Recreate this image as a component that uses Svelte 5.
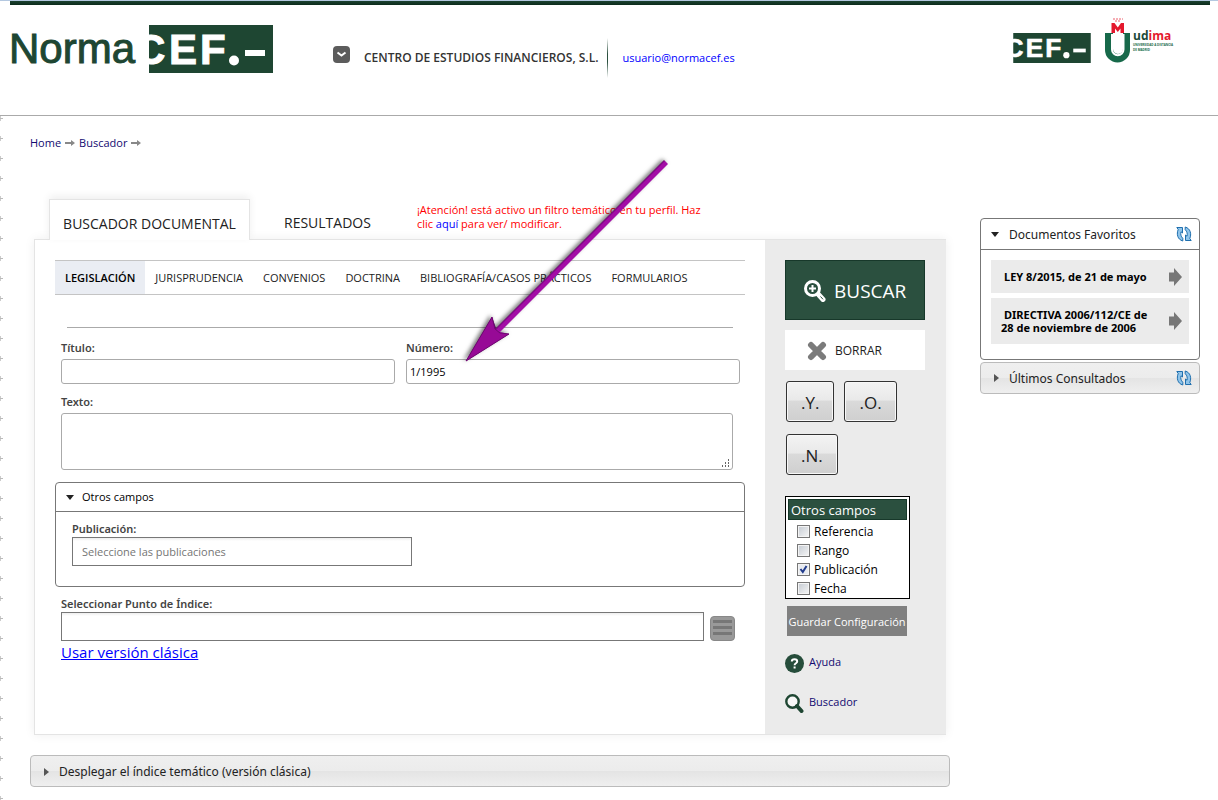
<script>
  const areas = ['LEGISLACIÓN', 'JURISPRUDENCIA', 'CONVENIOS', 'DOCTRINA', 'BIBLIOGRAFÍA/CASOS PRÁCTICOS', 'FORMULARIOS'];
  let activeArea = $state('LEGISLACIÓN');
  let titulo = $state('');
  let numero = $state('1/1995');
  let texto = $state('');
  let indice = $state('');
  const operators = ['.Y.', '.O.', '.N.'];
  let extraFields = $state([
    { name: 'Referencia', on: false },
    { name: 'Rango', on: false },
    { name: 'Publicación', on: true },
    { name: 'Fecha', on: false }
  ]);
  const favourites = ['LEY 8/2015, de 21 de mayo', 'DIRECTIVA 2006/112/CE de 28 de noviembre de 2006'];

  function clearForm() {
    titulo = '';
    numero = '';
    texto = '';
    indice = '';
  }
</script>

{#snippet cefLogo(cls)}
  <svg class={cls} viewBox="0 0 124 48" role="img" aria-label="CEF">
    <rect width="124" height="48" fill="#1e4632" />
    <text x="-14 20 51" y="39" class="cef-letters">CEF</text>
    <circle cx="85" cy="35.500" r="5" fill="#fff" />
    <rect x="96" y="25" width="20" height="6" fill="#fff" />
  </svg>
{/snippet}

{#snippet crumbArrow()}
  <svg class="crumb-arrow" viewBox="0 0 10 6" aria-hidden="true">
    <path d="M0 2H6V0L10 3L6 6V4H0Z" fill="#888" />
  </svg>
{/snippet}

{#snippet refreshIcon()}
  <svg viewBox="0 0 16 16" aria-hidden="true">
    <g fill="#8fc4ea" stroke="#1f6fae" stroke-width="1" stroke-linejoin="round">
      <path d="M.8 1.500H6.500V7L5 5.800C4.400 8 4.800 10.500 6.800 12.300V15C1.500 13.500 .3 8 2.200 3.500Z" />
      <path d="M15.200 14.500H9.500V9L11 10.200C11.600 8 11.200 5.500 9.200 3.700V1C14.500 2.500 15.700 8 13.800 12.500Z" />
    </g>
  </svg>
{/snippet}

<div class="page">
  <header>
    <div class="brand">
      <span class="norma">Norma</span>
      {@render cefLogo('cef-big')}
    </div>
    <div class="account">
      <button class="toggle" aria-label="Cuenta">
        <svg viewBox="0 0 17 17" aria-hidden="true"><path d="M4.500 6.500L8.500 9.500L12.500 6.500" fill="none" stroke="#fff" stroke-width="2" /></svg>
      </button>
      <strong>CENTRO DE ESTUDIOS FINANCIEROS, S.L.</strong>
      <span class="rule"></span>
      <a href="#cuenta">usuario@normacef.es</a>
    </div>
    <div class="partners">
      {@render cefLogo('cef-small')}
      <svg class="udima" viewBox="0 0 74 46" role="img" aria-label="udima">
        <path d="M0 15H8V31a5 5 0 0 0 10 0V15H25V32A12.500 12.500 0 0 1 0 32Z" fill="#17694a" />
        <path d="M7 16V31.500a5.500 5.500 0 0 0 11.500 0V16" fill="none" stroke="#fff" stroke-width="2" />
        <path d="M6.500 15V5H9.500L12.800 9.500L16 5H19V15H15.500V10.500L12.800 14L10 10.500V15Z" fill="#e4182d" />
        <path d="M8 1H18M10 3H16" stroke="#e4182d" stroke-width="1" stroke-dasharray="2 1" opacity="0.700" />
        <text x="28" y="22" class="udima-name">ud<tspan fill="#e4182d">ima</tspan></text>
        <text x="28" y="28" class="udima-sub">UNIVERSIDAD A DISTANCIA</text>
        <text x="28" y="33" class="udima-sub">DE MADRID</text>
      </svg>
    </div>
  </header>

  <div class="columns">
    <main>
      <nav class="crumbs" aria-label="Ruta">
        <a href="#home">Home</a>{@render crumbArrow()}<a href="#buscador">Buscador</a>{@render crumbArrow()}
      </nav>

      <div class="tabs">
        <button class="tab active">BUSCADOR DOCUMENTAL</button>
        <button class="tab">RESULTADOS</button>
        <p class="notice">¡Atención! está activo un filtro temático en tu perfil. Haz clic <a href="#perfil">aquí</a> para ver/ modificar.</p>
      </div>

      <div class="panel">
        <form class="search" onsubmit={(e) => e.preventDefault()}>
          <nav class="areas" aria-label="Áreas">
            {#each areas as area}
              <button type="button" class:current={area === activeArea} onclick={() => (activeArea = area)}>{area}</button>
            {/each}
          </nav>
          <hr />
          <div class="pair">
            <div class="field">
              <label for="titulo">Título:</label>
              <input id="titulo" bind:value={titulo} />
            </div>
            <div class="field">
              <label for="numero">Número:</label>
              <input id="numero" bind:value={numero} />
            </div>
          </div>
          <div class="field text">
            <label for="texto">Texto:</label>
            <div class="area-wrap">
              <textarea id="texto" bind:value={texto}></textarea>
              <svg class="grip" viewBox="0 0 8 8" aria-hidden="true">
                <path d="M7 0h1v2h-1zM4 3h1v2h-1zM7 3h1v2h-1zM1 6h1v2h-1zM4 6h1v2h-1zM7 6h1v2h-1z" fill="#666" />
              </svg>
            </div>
          </div>
          <section class="more">
            <button type="button" class="more-head"><i class="down"></i>Otros campos</button>
            <div class="more-body">
              <label for="publicacion">Publicación:</label>
              <input id="publicacion" class="square" placeholder="Seleccione las publicaciones" />
            </div>
          </section>
          <div class="index">
            <label for="indice">Seleccionar Punto de Índice:</label>
            <div class="index-row">
              <input id="indice" class="square" bind:value={indice} />
              <button type="button" class="list" aria-label="Abrir índice">
                <svg viewBox="0 0 23 23" aria-hidden="true"><path d="M2 4.500H21M2 10.500H21M2 16.500H21" stroke="#777" stroke-width="3" /></svg>
              </button>
            </div>
            <a class="classic" href="#clasica">Usar versión clásica</a>
          </div>
        </form>

        <aside class="tools">
          <button class="buscar">
            <svg viewBox="0 0 22 22" aria-hidden="true">
              <path d="M14 14L19 19.500" stroke="#fff" stroke-width="5" stroke-linecap="round" />
              <path d="M16.500 16.500L19 19.300" stroke="#2b503f" stroke-width="1" />
              <circle cx="8.500" cy="8.500" r="7" fill="#2b503f" stroke="#fff" stroke-width="3" />
              <path d="M8.500 5V12M5 8.500H12" stroke="#fff" stroke-width="2" />
            </svg>
            BUSCAR
          </button>
          <button class="borrar" onclick={clearForm}>
            <svg viewBox="0 0 20 20" aria-hidden="true"><path d="M4 4L16 16M16 4L4 16" stroke="#7b7b7b" stroke-width="6" stroke-linecap="round" /></svg>
            BORRAR
          </button>
          <div class="ops">
            {#each operators as op}<button>{op}</button>{/each}
          </div>
          <fieldset>
            <div class="legend">Otros campos</div>
            {#each extraFields as f}
              <label><input type="checkbox" bind:checked={f.on} />{f.name}</label>
            {/each}
          </fieldset>
          <button class="save">Guardar Configuración</button>
          <nav class="links" aria-label="Ayuda">
            <a href="#ayuda">
              <svg viewBox="0 0 19 19" aria-hidden="true">
                <circle cx="9.500" cy="9.500" r="9.500" fill="#264d3b" />
                <path d="M6.800 7.500C6.800 4.500 12.200 4.500 12.200 7.500C12.200 9.300 9.600 9.200 9.600 11.200M9.600 12.500V14.500" fill="none" stroke="#fff" stroke-width="2" />
              </svg>
              Ayuda
            </a>
            <a href="#buscador">
              <svg viewBox="0 0 19 19" aria-hidden="true">
                <circle cx="7.500" cy="7.500" r="6.200" fill="#f7f7f7" stroke="#1e4632" stroke-width="2.400" />
                <path d="M12 12L16.500 17" stroke="#1e4632" stroke-width="4" stroke-linecap="round" />
              </svg>
              Buscador
            </a>
          </nav>
        </aside>
      </div>

      <button class="fold"><i class="right"></i>Desplegar el índice temático (versión clásica)</button>
    </main>

    <aside class="side">
      <section class="fav">
        <div class="side-head">
          <i class="down"></i><h2>Documentos Favoritos</h2>
          <button class="refresh" aria-label="Actualizar favoritos">{@render refreshIcon()}</button>
        </div>
        <ul>
          {#each favourites as doc}
            <li>
              <a href="#documento">{doc}</a>
              <svg viewBox="0 0 13 18" aria-hidden="true"><path d="M0 4.500H5V0L13 9L5 18V13.500H0Z" fill="#777" /></svg>
            </li>
          {/each}
        </ul>
      </section>
      <div class="side-head closed">
        <i class="right"></i><h2>Últimos Consultados</h2>
        <button class="refresh" aria-label="Actualizar consultados">{@render refreshIcon()}</button>
      </div>
    </aside>
  </div>

  <svg class="pointer" viewBox="0 0 220 220" aria-hidden="true">
    <defs>
      <linearGradient id="shaft" gradientUnits="userSpaceOnUse" x1="107" y1="107" x2="112" y2="112">
        <stop offset="0.200" stop-color="#5a0560" />
        <stop offset="0.600" stop-color="#a30da6" />
      </linearGradient>
    </defs>
    <path d="M10 210L36 166L40 177L208 9L212 13L44 181L53 183Z" fill="url(#shaft)" />
    <path d="M10 210L36 166L39 178L44 182L53 183Z" fill="#970a96" stroke="#6d0870" stroke-width="1" />
  </svg>
</div>

<style>
  :global(body) {
    margin: 0;
    background: #fff;
  }
  .page {
    position: relative;
    min-height: 800px;
    overflow: hidden;
    color: #222;
    font: 12px/16px 'Open Sans', 'Noto Sans', sans-serif;
    box-sizing: border-box;
  }
  .page :global(*) {
    box-sizing: border-box;
  }
  button,
  input,
  textarea {
    font: inherit;
    color: inherit;
    margin: 0;
  }
  button {
    padding: 0;
    border: 0;
    background: none;
    cursor: pointer;
  }
  svg {
    display: block;
    flex: none;
  }
  a {
    color: #00f;
    text-decoration: none;
  }

  header {
    display: flex;
    height: 116px;
    border-bottom: 1px solid #aaa;
    background:
      linear-gradient(#1b4230, #0c2c1c) 10px 1px / calc(100% - 18px) 4px no-repeat,
      linear-gradient(#b4c8e0, #b4c8e0) 0 0 / 100% 1px no-repeat;
    padding: 0 39px 0 9px;
  }
  .brand {
    display: flex;
    gap: 14px;
    width: 324px;
    padding-top: 25px;
  }
  .norma {
    font: 42px/48px 'Liberation Sans', sans-serif;
    color: #1e4632;
    -webkit-text-stroke: 1px #1e4632;
  }
  .cef-big {
    width: 124px;
    height: 48px;
  }
  .cef-letters {
    font: bold 42px 'Liberation Sans', sans-serif;
    fill: #fff;
    stroke: #fff;
    stroke-width: 1px;
  }
  .account {
    display: flex;
    flex: 1;
    height: 40px;
    margin-top: 38px;
    align-items: center;
  }
  .toggle {
    width: 17px;
    height: 17px;
    border-radius: 4px;
    background: #5c5c5c;
    margin: 0 14px 7px 0;
  }
  .account strong {
    font-weight: 600;
    color: #333;
  }
  .rule {
    width: 1px;
    height: 40px;
    margin: 0 14px 0 9px;
    background: linear-gradient(#fff, #2b503f 40%, #2b503f 60%, #fff);
  }
  .account a {
    font-size: 11px;
  }
  .partners {
    display: flex;
    gap: 14px;
    padding-top: 18px;
  }
  .cef-small {
    width: 78px;
    height: 30px;
    margin-top: 15px;
  }
  .udima {
    width: 74px;
    height: 46px;
    overflow: visible;
  }
  .udima-name {
    font: bold 12px 'Open Sans', sans-serif;
    fill: #1b4a39;
  }
  .udima-sub {
    font: bold 3px 'Open Sans', sans-serif;
    fill: #17694a;
  }

  .columns {
    display: grid;
    grid-template-columns: 1fr 220px;
    gap: 30px;
    align-items: start;
    padding: 19px 18px 13px 30px;
    background:
      repeating-linear-gradient(#0000 0 2px, #bbb 2px 3px, #0000 3px 20px) 0 0 / 3px 100% no-repeat,
      repeating-linear-gradient(#ccc 0 5px, #0000 5px 20px) 0 0 / 1px 100% no-repeat;
  }
  .crumbs {
    display: flex;
    align-items: center;
    gap: 4px;
    font-size: 11px;
  }
  .crumbs a,
  .links a {
    color: #120a70;
  }
  .crumb-arrow {
    width: 10px;
    height: 6px;
  }
  .tabs {
    display: flex;
    align-items: flex-start;
    height: 40px;
    margin: 48px 0 0 19px;
  }
  .tab {
    height: 41px;
    padding-top: 7px;
    font-size: 14px;
  }
  .tab.active {
    position: relative;
    width: 201px;
    border: 1px solid #e4e4e4;
    border-bottom: 0;
    background: #fff;
    box-shadow: 0 -3px 8px #0001;
    margin-right: 34px;
  }
  .notice {
    width: 300px;
    margin: 4px 0 0 46px;
    font-size: 11px;
    line-height: 14px;
    color: #f00;
  }
  .panel {
    display: grid;
    grid-template-columns: 1fr 181px;
    margin: 0 4px;
    border: 1px solid #e4e4e4;
    border-right: 0;
    background: #fff;
    box-shadow: 0 0 10px #0001;
  }
  .search {
    padding: 20px;
  }
  .areas {
    display: flex;
    height: 35px;
    border: solid #c4c4c4;
    border-width: 1px 0;
  }
  .areas button {
    padding: 0 10px;
    font-size: 11px;
    white-space: nowrap;
  }
  .areas .current {
    background: #eaedf3;
    font-weight: 600;
    color: #000;
  }
  hr {
    margin: 32px 12px 12px;
    border: 0;
    border-top: 1px solid #aaa;
  }
  .pair {
    display: grid;
    grid-template-columns: 1fr 1fr;
    gap: 11px;
    margin: 0 5px 0 6px;
  }
  .search label {
    display: block;
    font-family: 'Noto Sans', sans-serif;
    font-size: 11px;
    font-weight: 600;
    color: #444;
  }
  .field label {
    margin-bottom: 3px;
  }
  .field input,
  textarea {
    display: block;
    width: 100%;
    height: 25px;
    padding: 0 3px;
    border: 1px solid #aaa;
    border-radius: 3px;
    background: #fff;
    font-size: 11px;
    color: #000;
  }
  .text {
    margin: 10px 12px 0 6px;
  }
  .area-wrap {
    position: relative;
  }
  textarea {
    height: 57px;
    resize: none;
  }
  .grip {
    position: absolute;
    right: 4px;
    bottom: 3px;
    width: 8px;
    height: 8px;
  }
  .more {
    margin-top: 12px;
    height: 105px;
    border: 1px solid #777;
    border-radius: 4px;
  }
  .more-head {
    display: flex;
    align-items: center;
    gap: 8px;
    width: 100%;
    height: 29px;
    padding-left: 10px;
    border-bottom: 1px solid #777;
    font-size: 11px;
    color: #000;
  }
  .more-body {
    padding: 9px 16px;
  }
  .square {
    display: block;
    height: 29px;
    padding: 0 9px;
    border: 1px solid #777;
    background: linear-gradient(#eee, #fff 3px);
    font-size: 11px;
  }
  .more-body .square {
    width: 340px;
  }
  .square::placeholder {
    color: #757575;
    opacity: 1;
  }
  .index {
    margin: 9px 10px 0 6px;
  }
  .index-row {
    display: flex;
    align-items: flex-end;
    gap: 6px;
  }
  .index-row .square {
    flex: 1;
  }
  .list {
    width: 25px;
    height: 25px;
    border: 1px solid #888;
    border-radius: 4px;
    background: #999;
  }
  .classic {
    display: inline-block;
    font-size: 15px;
    line-height: 22px;
    text-decoration: underline;
  }

  .tools {
    padding: 20px;
    background: #ebebeb;
  }
  .buscar,
  .borrar {
    display: flex;
    align-items: center;
    width: 140px;
  }
  .buscar {
    height: 60px;
    gap: 8px;
    padding: 2px 0 0 18px;
    border: 1px solid #17382a;
    background: #2b503f;
    color: #fff;
    font-size: 19px;
  }
  .buscar svg {
    width: 22px;
    height: 22px;
  }
  .borrar {
    height: 40px;
    gap: 8px;
    margin: 10px 0 11px;
    padding: 2px 0 0 22px;
    background: #fff;
  }
  .borrar svg {
    width: 20px;
    height: 20px;
  }
  .ops {
    display: flex;
    flex-wrap: wrap;
    gap: 12px 10px;
    padding: 0 1px;
  }
  .ops button {
    height: 41px;
    padding: 2px 14px 0;
    border: 1px solid #333;
    border-radius: 3px;
    background: linear-gradient(#f3f3f3, #e9e9e9 47%, #dadada 48%, #cfcfcf);
    box-shadow: inset 0 0 0 1px #f8f8f8;
    font-size: 17px;
  }
  fieldset {
    width: 125px;
    margin: 21px 0 0;
    padding: 2px 2px 0;
    border: 1px solid #000;
    background: #fff;
    color: #000;
  }
  .legend {
    height: 21px;
    margin-bottom: 2px;
    padding-left: 2px;
    border: 1px solid #17382a;
    background: #2b503f;
    color: #fff;
    font-size: 13px;
    line-height: 20px;
  }
  fieldset label {
    display: flex;
    align-items: center;
    gap: 4px;
    height: 19px;
    padding-left: 9px;
  }
  fieldset input {
    appearance: none;
    width: 13px;
    height: 13px;
    border: 1px solid #777;
    background: linear-gradient(135deg, #c4cad2, #f6f6f6);
    box-shadow: inset 0 0 0 1px #f4f4f4;
  }
  fieldset input:checked {
    background: url("data:image/svg+xml,%3Csvg xmlns='http://www.w3.org/2000/svg' viewBox='0 0 11 11'%3E%3Cpath d='M2.500 5L4.800 8L8.500 2' fill='none' stroke='%23223c8c' stroke-width='2'/%3E%3C/svg%3E") #e8ebf0;
  }
  .save {
    display: block;
    width: 120px;
    height: 30px;
    margin: 7px 0 18px 2px;
    padding-top: 2px;
    background: #808080;
    color: #fff;
    font-size: 11px;
    white-space: nowrap;
  }
  .links {
    display: grid;
    gap: 20px;
  }
  .links a {
    display: flex;
    gap: 5px;
    height: 20px;
    font-size: 11px;
  }
  .links svg {
    width: 19px;
    height: 19px;
  }

  i {
    flex: none;
    border: 4px solid transparent;
  }
  .down {
    border-top: 5px solid #222;
    border-bottom: 0;
  }
  .right {
    border-left: 5px solid #555;
    border-right: 0;
  }
  .fold,
  .closed {
    border: 1px solid #bbb;
    border-radius: 4px;
    background: linear-gradient(#efefef, #ececec 50%, #e4e4e4 51%, #efefef);
  }
  .fold {
    display: flex;
    align-items: center;
    gap: 10px;
    width: 100%;
    height: 32px;
    margin-top: 20px;
    padding: 1px 0 0 13px;
    font-family: 'Noto Sans', sans-serif;
  }
  .side {
    margin-top: 83px;
    font-family: 'Noto Sans', sans-serif;
  }
  .fav {
    border: 1px solid #777;
    border-radius: 4px;
  }
  .side-head {
    display: flex;
    align-items: center;
    height: 31px;
    padding: 0 7px 0 10px;
  }
  .fav .side-head {
    border-bottom: 1px solid #777;
  }
  h2 {
    flex: 1;
    margin: 0 0 0 10px;
    padding-top: 2px;
    font-size: 12px;
    font-weight: 400;
  }
  .refresh svg {
    width: 16px;
    height: 16px;
  }
  ul {
    display: grid;
    gap: 5px;
    margin: 0;
    padding: 10px 10px 15px;
    list-style: none;
  }
  li {
    display: flex;
    align-items: center;
    justify-content: space-between;
    gap: 10px;
    padding: 0 7px 0 10px;
    background: #ebebeb;
  }
  li a {
    padding: 10px 0;
    color: #000;
    font-size: 11px;
    font-weight: 700;
    line-height: 13px;
    text-indent: 3px;
  }
  li svg {
    width: 13px;
    height: 18px;
  }
  .closed {
    height: 32px;
    margin-top: 2px;
  }
  .closed .right {
    margin-left: 3px;
  }

  .pointer {
    position: absolute;
    left: 456px;
    top: 151px;
    width: 220px;
    height: 220px;
    pointer-events: none;
    filter: drop-shadow(-2px -1px 2px #0008);
  }
</style>
